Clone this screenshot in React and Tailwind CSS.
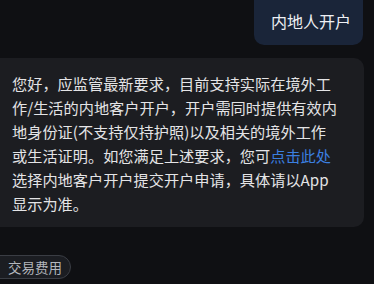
import React from 'react';

const font = { fontFamily: '"Noto Sans CJK SC", "Noto Sans", sans-serif' };

export default function App() {
  return (
    <div className="w-[374px] h-[284px] overflow-hidden bg-[#0f1013] text-[#e8e8ea]" style={font}>
      <div className="flex justify-end pr-[11px]">
        <div className="-mt-[12px] rounded-[10px] bg-[#1a2539] pl-[17px] pr-[12px] pt-[21px] pb-[12px] text-[16px] leading-[24px] text-[#eef0f4]">
          内地人开户
        </div>
      </div>
      <div className="mt-[13px] -ml-[12px] w-[376px] rounded-[10px] bg-[#1c1d21] pl-[24px] pr-[10px] pt-[13px] pb-[12px] text-[15.2px] leading-[24px] text-[#e4e4e6]">
        您好，应监管最新要求，目前支持实际在境外工<br />
        作/生活的内地客户开户，开户需同时提供有效内<br />
        地身份证(不支持仅持护照)以及相关的境外工作<br />
        或生活证明。如您满足上述要求，您可<span className="text-[#3b7fe0]">点击此处</span><br />
        选择内地客户开户提交开户申请，具体请以App<br />
        显示为准。
      </div>
      <div className="mt-[28px] flex">
        <div className="-ml-[14px] rounded-full border border-[#3a3d44] bg-[#1b1d22] pl-[21px] pr-[8px] py-[1px] text-[13.5px] leading-[20px] text-[#b3b6bc]">
          交易费用
        </div>
      </div>
    </div>
  );
}
